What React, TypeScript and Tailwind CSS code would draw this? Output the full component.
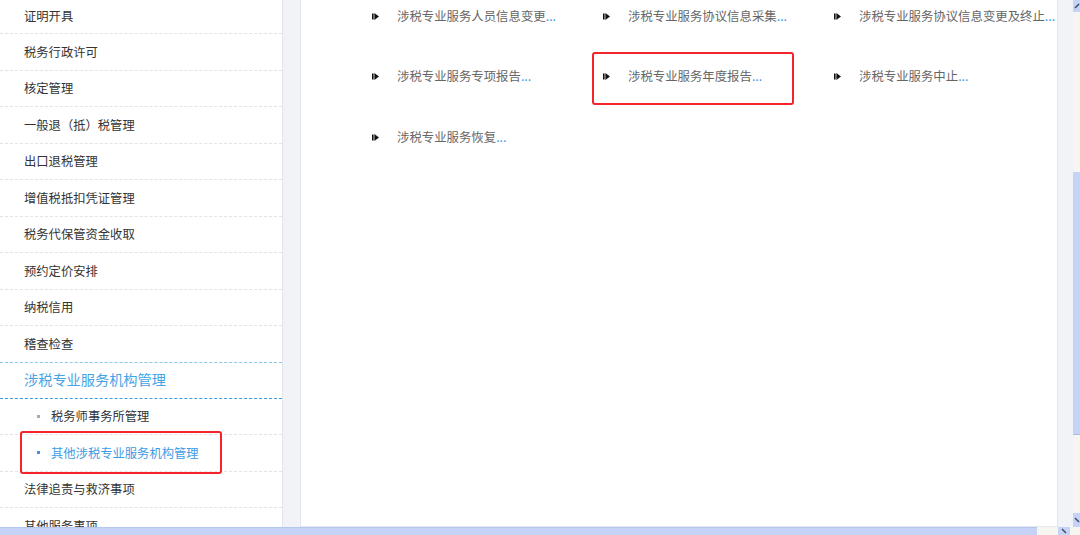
import React from "react";

const FONT = { fontFamily: '"Noto Sans CJK SC", "Microsoft YaHei", sans-serif' };

const sideTop = [
  "证明开具",
  "税务行政许可",
  "核定管理",
  "一般退（抵）税管理",
  "出口退税管理",
  "增值税抵扣凭证管理",
  "税务代保管资金收取",
  "预约定价安排",
  "纳税信用",
  "稽查检查",
];

const services = [
  "涉税专业服务人员信息变更",
  "涉税专业服务协议信息采集",
  "涉税专业服务协议信息变更及终止",
  "涉税专业服务专项报告",
  "涉税专业服务年度报告",
  "涉税专业服务中止",
  "涉税专业服务恢复",
];

function Arrow() {
  return (
    <svg width="7" height="7" viewBox="0 0 7 7" className="shrink-0">
      <rect x="0" y="0.5" width="1.6" height="6" fill="#111" />
      <polygon points="2.4,0 7,3.5 2.4,7" fill="#111" />
    </svg>
  );
}

function SideRow({ label, first }: { label: string; first?: boolean }) {
  return (
    <div
      className={`flex items-center pl-6 border-b border-dashed border-[#e3e3e3] text-[12.3px] text-[#333] ${
        first ? "h-[34px]" : "h-[36.5px]"
      }`}
    >
      {label}
    </div>
  );
}

function SubRow({ label, active }: { label: string; active?: boolean }) {
  return (
    <div className="flex items-center h-[36.5px] pl-[37px] border-b border-dashed border-[#e3e3e3] text-[12.3px]">
      <span className={`w-[3px] h-[3px] mr-[11px] ${active ? "bg-[#4a90e2]" : "bg-[#aaa]"}`} />
      <span className={active ? "text-[#3d9be4]" : "text-[#333]"}>{label}</span>
    </div>
  );
}

export default function App() {
  return (
    <div className="relative w-[1080px] h-[535px] overflow-hidden bg-white flex flex-col" style={FONT}>
      <div className="flex h-[527px]">
        {/* sidebar */}
        <aside className="w-[282px] shrink-0 h-full overflow-hidden bg-white">
          {sideTop.map((s, i) => (
            <SideRow key={s} label={s} first={i === 0} />
          ))}
          <div className="flex items-center h-[37px] pl-6 border-t border-b border-dashed border-t-[#8ccbef] border-b-[#3d9be4] text-[14.2px] text-[#44a4e6] -mt-px">
            涉税专业服务机构管理
          </div>
          <SubRow label="税务师事务所管理" />
          <SubRow label="其他涉税专业服务机构管理" active />
          <SideRow label="法律追责与救济事项" />
          <SideRow label="其他服务事项" />
        </aside>

        <div className="w-[19px] shrink-0 h-full bg-[#f1f3f8] border-l border-r border-[#e2e5ec]" />

        {/* main */}
        <main className="flex-1 min-w-0 h-full overflow-hidden bg-white border-b border-[#e6e8ee]">
          <div className="grid grid-cols-[231px_231px_231px] gap-y-[28.5px] pl-[71px]">
            {services.map((s) => (
              <div key={s} className="flex items-center h-[32px] text-[12.4px] text-[#666] whitespace-nowrap">
                <Arrow />
                <span className="ml-[18px]">
                  {s}
                  <span className="text-[#3d9be4]">...</span>
                </span>
              </div>
            ))}
          </div>
        </main>

        <div className="w-[16px] shrink-0 h-full bg-[#f1f3f8] border-l border-[#e2e5ec]" />

        {/* vertical scrollbar */}
        <div className="w-[7px] shrink-0 h-full flex flex-col bg-[#f6f5ef]">
          <div className="h-[12px] bg-[#c4d3f6] flex items-center justify-center">
            <svg width="6" height="6" viewBox="0 0 6 6">
              <path d="M1 5 L5 1" stroke="#3c4a66" strokeWidth="1.4" />
            </svg>
          </div>
          <div className="h-[160px]" />
          <div className="h-[263px] bg-[#c4d3f6] border-b border-[#a9bbe8]" />
          <div className="flex-1" />
          <div className="h-[14px] bg-[#c4d3f6] flex items-center justify-center">
            <svg width="6" height="6" viewBox="0 0 6 6">
              <path d="M1 1 L5 5" stroke="#3c4a66" strokeWidth="1.4" />
            </svg>
          </div>
        </div>
      </div>

      {/* horizontal scrollbar */}
      <div className="flex h-[8px] bg-[#f6f5ef]">
        <div className="w-[1037px] shrink-0 h-full bg-[#c4d3f6] border-t border-[#b5c6ef]" />
        <div className="w-[21px] shrink-0" />
        <div className="w-[12px] shrink-0 h-full bg-[#c4d3f6] flex items-center justify-center">
          <svg width="6" height="6" viewBox="0 0 6 6">
            <path d="M1 1 L5 5" stroke="#3c4a66" strokeWidth="1.4" />
          </svg>
        </div>
      </div>

      {/* annotation boxes */}
      <div className="absolute left-[20px] top-[431px] w-[202px] h-[43px] border-2 border-[#f5242a] rounded-[3px]" />
      <div className="absolute left-[592px] top-[52px] w-[202px] h-[53px] border-2 border-[#f5242a] rounded-[3px]" />
    </div>
  );
}
